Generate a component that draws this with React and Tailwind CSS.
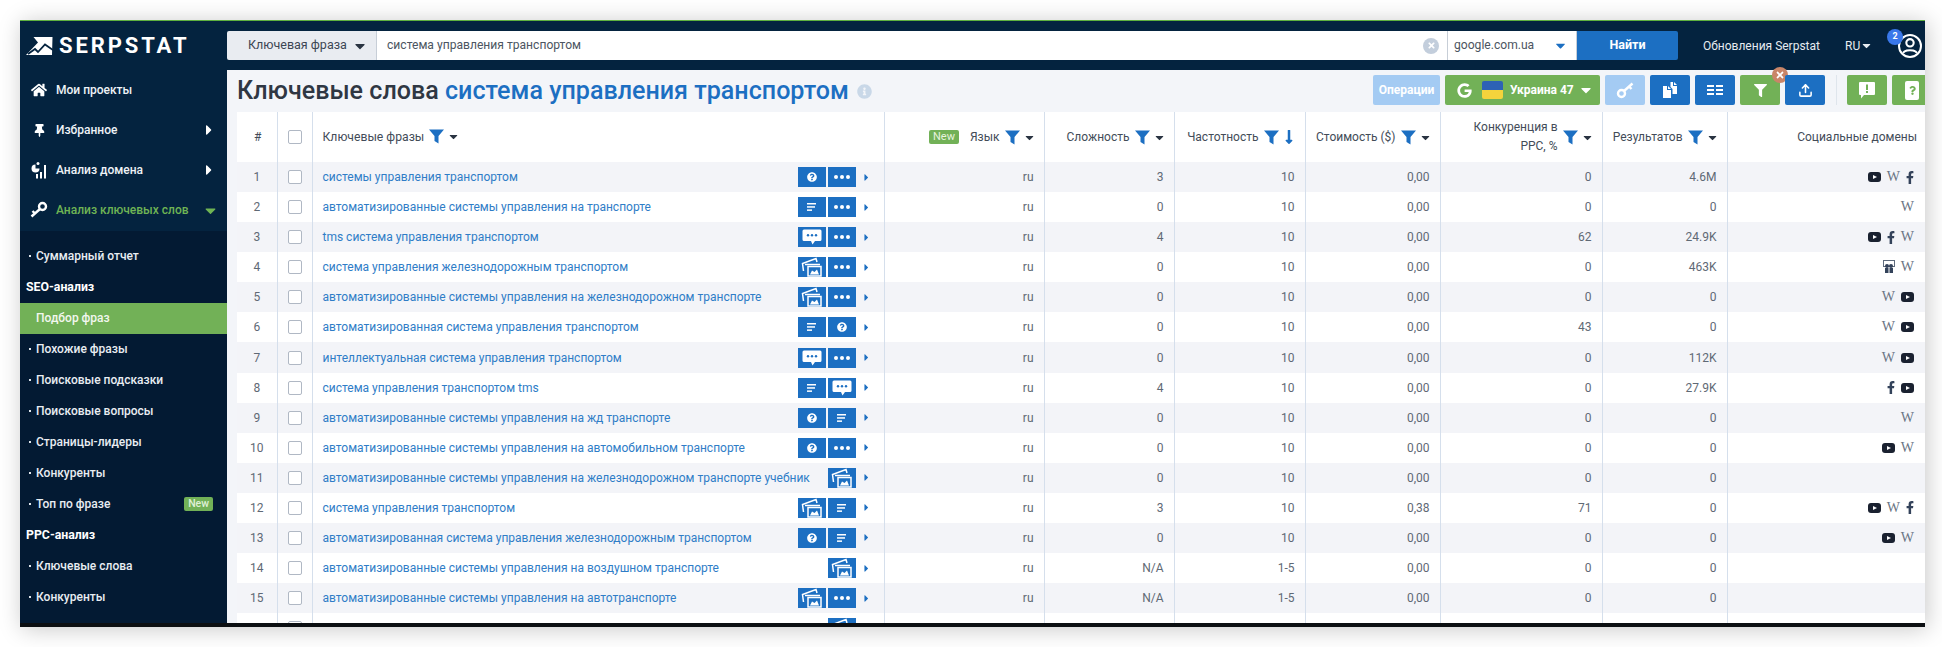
import React from 'react';
import { FaHome, FaThumbtack, FaCaretDown, FaCaretRight, FaTimes, FaFacebookF, FaGoogle, FaInfoCircle, FaQuestionCircle, FaFilter, FaQuestion, FaLongArrowAltDown } from 'react-icons/fa';
import { FiUpload } from 'react-icons/fi';

const rows = [
  ['системы управления транспортом', ['q', 'dots'], '3', '10', '0,00', '0', '4.6M', ['yt', 'w', 'f']],
  ['автоматизированные системы управления на транспорте', ['lines', 'dots'], '0', '10', '0,00', '0', '0', ['w']],
  ['tms система управления транспортом', ['chat', 'dots'], '4', '10', '0,00', '62', '24.9K', ['yt', 'f', 'w']],
  ['система управления железнодорожным транспортом', ['img', 'dots'], '0', '10', '0,00', '0', '463K', ['bag', 'w']],
  ['автоматизированные системы управления на железнодорожном транспорте', ['img', 'dots'], '0', '10', '0,00', '0', '0', ['w', 'yt']],
  ['автоматизированная система управления транспортом', ['lines', 'q'], '0', '10', '0,00', '43', '0', ['w', 'yt']],
  ['интеллектуальная система управления транспортом', ['chat', 'dots'], '0', '10', '0,00', '0', '112K', ['w', 'yt']],
  ['система управления транспортом tms', ['lines', 'chat'], '4', '10', '0,00', '0', '27.9K', ['f', 'yt']],
  ['автоматизированные системы управления на жд транспорте', ['q', 'lines'], '0', '10', '0,00', '0', '0', ['w']],
  ['автоматизированные системы управления на автомобильном транспорте', ['q', 'dots'], '0', '10', '0,00', '0', '0', ['yt', 'w']],
  ['автоматизированные системы управления на железнодорожном транспорте учебник', ['img'], '0', '10', '0,00', '0', '0', []],
  ['система управления транспортом', ['img', 'lines'], '3', '10', '0,38', '71', '0', ['yt', 'w', 'f']],
  ['автоматизированная система управления железнодорожным транспортом', ['q', 'lines'], '0', '10', '0,00', '0', '0', ['yt', 'w']],
  ['автоматизированные системы управления на воздушном транспорте', ['img'], 'N/A', '1-5', '0,00', '0', '0', []],
  ['автоматизированные системы управления на автотранспорте', ['img', 'dots'], 'N/A', '1-5', '0,00', '0', '0', []],
];

const mainNav = [
  { label: 'Мои проекты', icon: <FaHome size={16} /> },
  { label: 'Избранное', icon: <FaThumbtack size={13} />, arrow: true },
  { label: 'Анализ домена', icon: <DomainIcon />, arrow: true },
  { label: 'Анализ ключевых слов', icon: <KeyIcon size={18} className="rotate-180" />, open: true },
];

const subNav = [
  { label: 'Суммарный отчет' },
  { label: 'SEO-анализ', head: true },
  { label: 'Подбор фраз', active: true },
  { label: 'Похожие фразы' },
  { label: 'Поисковые подсказки' },
  { label: 'Поисковые вопросы' },
  { label: 'Страницы-лидеры' },
  { label: 'Конкуренты' },
  { label: 'Топ по фразе', isNew: true },
  { label: 'PPC-анализ', head: true },
  { label: 'Ключевые слова' },
  { label: 'Конкуренты' },
];

function DomainIcon() {
  return (
    <svg width="16" height="17" viewBox="0 0 16 17" fill="white">
      <path d="M4.500 2.500a4 4 0 1 0 4 4h-4z" />
      <rect x="5.500" y="0" width="3" height="3" rx="1.500" />
      <rect x="9" y="10" width="2" height="6.500" />
      <rect x="13" y="3" width="2" height="13.500" />
      <rect x="5" y="12" width="2" height="4.500" />
    </svg>
  );
}

function KeyIcon({ size = 18, className = '' }) {
  return (
    <svg width={size} height={size} viewBox="0 0 18 18" fill="none" stroke="white" strokeWidth="2.400" className={className}>
      <circle cx="5.500" cy="12.500" r="3.500" />
      <path d="M8 10 L16.500 2.500" />
      <path d="M13 5.500 L15.500 8" />
    </svg>
  );
}

function CopyIcon() {
  return (
    <svg width="18" height="18" viewBox="0 0 18 18" fill="white">
      <path d="M9.500 1 H12 V5 H16 V13 H11.500 V8 L9.500 6 Z" />
      <path d="M13 1 L16 4 H13 Z" />
      <path d="M2 5 H6 V9 H10 V17 H2 Z" />
      <path d="M7 5 L10 8 H7 Z" />
    </svg>
  );
}

function Logo() {
  return (
    <svg width="27" height="18" viewBox="0 0 27 18" fill="white">
      <path d="M0 18 L12 5.500 L7.500 0 H26.500 L26 18 Z" />
      <path d="M2 17 L9 12 L12 15 L19 7.500 L27 13" fill="none" stroke="#04233f" strokeWidth="1.800" />
    </svg>
  );
}

function Funnel() {
  return (
    <svg width="15" height="15" viewBox="0 0 15 15" className="inline-block shrink-0" fill="#1c6fc2">
      <path d="M0 0.500 H15 L9.500 7 V14.500 L5.500 12 V7 Z" />
    </svg>
  );
}

function Caret() {
  return <FaCaretDown size={13} className="-ml-[2px] inline-block shrink-0 text-[#2a3442]" />;
}

function LinesIcon() {
  return (
    <svg width="9" height="8" viewBox="0 0 9 8" fill="white">
      <rect x="0" y="0" width="9" height="1.500" />
      <rect x="0" y="3.200" width="8" height="1.500" />
      <rect x="0" y="6.400" width="5" height="1.500" />
    </svg>
  );
}

function ChatIcon() {
  return (
    <svg width="20" height="16" viewBox="0 0 20 16">
      <path d="M2 0.500 H18 A1.500 1.500 0 0 1 19.500 2 V10.500 A1.500 1.500 0 0 1 18 12 H13 L10.500 15.500 L9 12 H2 A1.500 1.500 0 0 1 0.500 10.500 V2 A1.500 1.500 0 0 1 2 0.500 Z" fill="white" />
      <circle cx="6" cy="6.200" r="1.200" fill="#1c6fc2" />
      <circle cx="10" cy="6.200" r="1.200" fill="#1c6fc2" />
      <circle cx="14" cy="6.200" r="1.200" fill="#1c6fc2" />
    </svg>
  );
}

function ImgIcon() {
  return (
    <svg width="22" height="20" viewBox="0 0 22 20" fill="none" stroke="white" strokeWidth="1.500">
      <path d="M2.500 14 L1.500 6.500 L15 1.500 L16 5" />
      <path d="M4 7.500 H19" />
      <rect x="7" y="9.500" width="13" height="9.500" fill="#1c6fc2" />
      <path d="M9 17.500 L11 13.500 L13.500 15 L16 12.500 L18 17.500 Z" fill="white" stroke="none" />
    </svg>
  );
}

function ActionButton({ type }) {
  return (
    <span className="flex h-5 w-7 items-center justify-center overflow-hidden bg-[#1c6fc2] text-white">
      {type === 'q' && <FaQuestionCircle size={10} />}
      {type === 'lines' && <LinesIcon />}
      {type === 'chat' && <ChatIcon />}
      {type === 'img' && <ImgIcon />}
      {type === 'dots' && (
        <span className="flex gap-[2px]">
          <span className="size-[4px] rounded-full bg-white" />
          <span className="size-[4px] rounded-full bg-white" />
          <span className="size-[4px] rounded-full bg-white" />
        </span>
      )}
    </span>
  );
}

function SocialIcon({ type }) {
  if (type === 'w') return <span className="font-['Liberation_Serif',serif] text-[14px] leading-none text-[#6a7585]">W</span>;
  if (type === 'f') return <FaFacebookF size={13} className="w-[8px] text-[#33425a]" />;
  if (type === 'yt')
    return (
      <svg width="13" height="10" viewBox="0 0 13 10">
        <rect width="13" height="10" rx="3" fill="#1a2130" />
        <path d="M5 3 L9 5 L5 7 Z" fill="white" />
      </svg>
    );
  return (
    <svg width="12" height="14" viewBox="0 0 12 14">
      <rect x="0.500" y="0.500" width="11" height="6" fill="none" stroke="#5f6b7d" />
      <circle cx="4" cy="6" r="2" fill="#33425a" />
      <circle cx="8" cy="6" r="2" fill="#33425a" />
      <path d="M2 8 H5.500 V13 H2 Z M6.500 8 H10 V13 H6.500 Z" fill="#33425a" />
    </svg>
  );
}

function ToolButton({ className = '', children }) {
  return <div className={`relative flex h-[30px] shrink-0 items-center justify-center rounded-[2px] text-white ${className}`}>{children}</div>;
}

function HeadCell({ children }) {
  return <span className="flex items-center justify-end gap-[5px] whitespace-nowrap">{children}</span>;
}

const th = 'border-r border-[#d5dfec] pl-[10px] pr-[8px] font-normal';
const td = 'border-r border-[#d5dfec] pr-[10px] text-right';
const box = 'block size-[14px] appearance-none rounded-[2px] border border-[#b0b8c4] bg-white';

export default function App() {
  return (
    <div className="h-[647px] w-[1942px] overflow-hidden bg-white pl-5 pt-5 font-['Roboto',sans-serif]">
      <div className="flex h-[607px] w-[1905px] flex-col overflow-hidden border-t border-b-4 border-t-[#5fb03f] border-b-[#0c0f12] shadow-[2px_2px_22px_rgba(0,0,0,0.22)]">
        <header className="flex h-[49px] shrink-0 items-center bg-[#04233f]">
          <div className="flex w-[207px] shrink-0 items-center gap-[6px] pl-[6px] text-white">
            <Logo />
            <span className="text-[22px] font-bold leading-none tracking-[2.900px]">SERPSTAT</span>
          </div>
          <div className="flex h-[29px] text-[12.5px]">
            <div className="flex w-[149px] items-center justify-between rounded-l-[2px] bg-[#e9ecf1] pl-[21px] pr-[8px] text-[#3c4654]">
              Ключевая фраза <FaCaretDown size={16} className="text-[#2a3442]" />
            </div>
            <div className="flex w-[1071px] items-center justify-between border-l border-[#c7ced7] bg-white pl-[10px] pr-2 text-[12.1px] text-[#4c5561]">
              система управления транспортом
              <span className="flex size-4 items-center justify-center rounded-full bg-[#c3cedc] text-white">
                <FaTimes size={9} />
              </span>
            </div>
            <div className="flex w-[130px] items-center justify-between border-x border-[#c7ced7] bg-white pl-[6px] pr-2 text-[12.1px] text-[#4c5561]">
              google.com.ua <FaCaretDown size={15} className="text-[#1c6fc2]" />
            </div>
            <div className="flex w-[101px] items-center justify-center rounded-r-[2px] bg-[#1c6fc2] font-bold text-white">Найти</div>
          </div>
          <span className="ml-[25px] whitespace-nowrap text-[12px] text-[#e6ebf0]">Обновления Serpstat</span>
          <span className="ml-[25px] flex items-center text-[12px] text-[#e6ebf0]">
            RU
            <FaCaretDown size={13} />
          </span>
          <div className="relative ml-[25px] size-6 shrink-0">
            <div className="flex size-6 items-center justify-center overflow-hidden rounded-full border-2 border-white bg-[#04233f]">
              <svg width="20" height="20" viewBox="0 0 19 19" fill="none" stroke="white" strokeWidth="2">
                <circle cx="9.500" cy="6.500" r="3.500" />
                <path d="M2 18 C3 12 16 12 17 18" />
              </svg>
            </div>
            <span className="absolute -left-[11px] -top-[5px] flex size-4 items-center justify-center rounded-full bg-[#3a78ea] text-[9px] font-bold text-white">2</span>
          </div>
        </header>

        <div className="flex min-h-0 flex-1">
          <aside className="flex w-[207px] shrink-0 flex-col overflow-hidden bg-[#04233f] text-[12px] font-medium">
            <nav className="flex h-[161px] shrink-0 flex-col">
              {mainNav.map((item) => (
                <div key={item.label} className="flex h-10 items-center">
                  <span className="flex w-[36px] shrink-0 justify-center pl-[2px] text-white">{item.icon}</span>
                  <span className={item.open ? 'whitespace-nowrap text-[#6fb454]' : 'text-[#eef2f6]'}>{item.label}</span>
                  {item.arrow && <FaCaretRight size={16} className="ml-auto mr-[10px] text-white" />}
                  {item.open && <FaCaretDown size={17} className="ml-auto mr-[8px] text-[#6fb454]" />}
                </div>
              ))}
            </nav>
            <div className="flex-1 bg-[#031a33] pt-[9.5px]">
              {subNav.map((item) => {
                if (item.head) {
                  return <div key={item.label} className="flex h-[31px] items-center pl-[6px] text-[12.3px] font-bold text-white">{item.label}</div>;
                }
                if (item.active) {
                  return <div key={item.label} className="flex h-[31px] items-center bg-[#72b157] pl-4 text-[#f2f7ee]">{item.label}</div>;
                }
                return (
                  <div key={item.label} className="flex h-[31px] items-center text-[#e9edf2]">
                    <span className="ml-[9px] mr-[5px] size-[2px] bg-[#dfe5eb]" />
                    {item.label}
                    {item.isNew && <span className="ml-auto mr-[14px] rounded-[2px] bg-[#72b157] px-[4px] py-[1px] text-[10.5px] leading-[12px] text-[#dff0d6]">New</span>}
                  </div>
                );
              })}
            </div>
          </aside>

          <main className="flex min-w-0 flex-1 flex-col bg-[#f3f5f9]">
            <div className="flex h-[42px] shrink-0 items-center pl-[10px]">
              <h1 className="whitespace-nowrap text-[25.100px] font-medium leading-none text-[#2f3743]">
                Ключевые слова <span className="text-[#1c6fc2]">система управления транспортом</span>
              </h1>
              <FaInfoCircle size={15} className="ml-2 text-[#c9d8e8]" />
              <div className="ml-auto mt-[5px] flex items-center gap-[5px] self-start">
                <div className="flex h-[30px] w-[67px] shrink-0 items-center justify-center rounded-[2px] bg-[#a4cbf3] text-[12px] font-bold text-white">Операции</div>
                <div className="flex h-[30px] w-[155px] shrink-0 items-center whitespace-nowrap rounded-[2px] bg-[#72b157] pl-[12px] pr-[6px] text-[12px] font-bold text-white">
                  <FaGoogle size={15} />
                  <span className="ml-[10px] mr-[7px] flex h-[18px] w-[21px] shrink-0 flex-col overflow-hidden rounded-[2px]">
                    <span className="flex-1 bg-[#2d62b5]" />
                    <span className="flex-1 bg-[#f4d33c]" />
                  </span>
                  Украина 47
                  <FaCaretDown size={16} className="ml-auto shrink-0" />
                </div>
                <ToolButton className="w-10 bg-[#a4cbf3]"><KeyIcon /></ToolButton>
                <ToolButton className="w-10 bg-[#1c6fc2]"><CopyIcon /></ToolButton>
                <ToolButton className="w-10 bg-[#1c6fc2]">
                  <span className="grid grid-cols-2 gap-x-[2px] gap-y-[2px]">
                    {[0, 1, 2, 3, 4, 5].map((i) => <span key={i} className="h-[2px] w-[7px] bg-white" />)}
                  </span>
                </ToolButton>
                <ToolButton className="w-10 bg-[#72b157]">
                  <FaFilter size={13} />
                  <span className="absolute -right-[8px] -top-[8px] flex size-[16px] items-center justify-center rounded-full bg-[#c98568] text-white">
                    <FaTimes size={10} />
                  </span>
                </ToolButton>
                <ToolButton className="w-10 bg-[#1c6fc2]"><FiUpload size={15} strokeWidth={2.5} /></ToolButton>
                <span className="ml-[6px] mr-[5px] h-[30px] w-px shrink-0 bg-[#dfe5ec]" />
                <ToolButton className="w-10 bg-[#72b157]">
                  <svg width="16" height="17" viewBox="0 0 16 17" fill="white">
                    <path d="M1 0 H15 A1 1 0 0 1 16 1 V12 A1 1 0 0 1 15 13 H5 L2 16.500 V13 H1 A1 1 0 0 1 0 12 V1 A1 1 0 0 1 1 0 Z" />
                    <rect x="7" y="2.500" width="2" height="5.500" fill="#72b157" />
                    <rect x="7" y="9" width="2" height="2" fill="#72b157" />
                  </svg>
                </ToolButton>
                <ToolButton className="w-[33px] justify-start rounded-r-none bg-[#72b157] pl-[13px]">
                  <span className="flex h-[19px] w-[14px] items-center justify-center rounded-[2px] bg-white text-[#72b157]"><FaQuestion size={9} /></span>
                </ToolButton>
              </div>
            </div>

            <div className="min-h-0 flex-1 overflow-hidden pl-[10px]">
              <table className="w-[1688px] table-fixed border-collapse bg-white text-[12px] text-[#5f6975]">
                <colgroup>
                  <col className="w-[40px]" />
                  <col className="w-[35px]" />
                  <col className="w-[572px]" />
                  <col className="w-[160px]" />
                  <col className="w-[130px]" />
                  <col className="w-[131px]" />
                  <col className="w-[135px]" />
                  <col className="w-[162px]" />
                  <col className="w-[125px]" />
                  <col className="w-[198px]" />
                </colgroup>
                <thead>
                  <tr className="h-[50px] text-[#434c58]">
                    <th className={`${th} text-center`}>#</th>
                    <th className={th}><input type="checkbox" className={box} /></th>
                    <th className={`${th} text-left`}>
                      <span className="flex items-center gap-[5px] text-[12.2px]">Ключевые фразы <Funnel /> <Caret /></span>
                    </th>
                    <th className={th}>
                      <HeadCell>
                        <span className="mr-[6px] rounded-[2px] bg-[#72b157] px-[4px] text-[11px] leading-[14px] text-[#e7f3df]">New</span>
                        Язык <Funnel /> <Caret />
                      </HeadCell>
                    </th>
                    <th className={th}><HeadCell>Сложность <Funnel /> <Caret /></HeadCell></th>
                    <th className={th}>
                      <HeadCell>
                        Частотность <Funnel /> <FaLongArrowAltDown size={16} className="-ml-[3px] text-[#1c6fc2]" />
                      </HeadCell>
                    </th>
                    <th className={th}><HeadCell>Стоимость ($) <Funnel /> <Caret /></HeadCell></th>
                    <th className={th}>
                      <HeadCell>
                        <span className="text-right leading-[19px]">Конкуренция в<br />PPC, %</span> <Funnel /> <Caret />
                      </HeadCell>
                    </th>
                    <th className={th}><HeadCell>Результатов <Funnel /> <Caret /></HeadCell></th>
                    <th className="px-[8px] text-right font-normal">Социальные домены</th>
                  </tr>
                </thead>
                <tbody>
                  {rows.map((row, i) => (
                    <tr key={i} className={i % 2 === 0 ? 'h-[30.08px] bg-[#f3f4f8]' : 'h-[30.08px] bg-white'}>
                      <td className="border-r border-[#d5dfec] text-center">{i + 1}</td>
                      <td className="border-r border-[#d5dfec] px-[10px]">
                        <input type="checkbox" className={box} />
                      </td>
                      <td className="border-r border-[#d5dfec] pl-[10px]">
                        <div className="flex items-center">
                          <a className="whitespace-nowrap text-[#2f7dc7]">{row[0]}</a>
                          <span className="ml-auto flex shrink-0 items-center gap-[2px]">
                            {row[1].map((b, k) => <ActionButton key={k} type={b} />)}
                          </span>
                          <FaCaretRight size={11} className="ml-[5px] mr-[12px] shrink-0 text-[#1c6fc2]" />
                        </div>
                      </td>
                      <td className={td}>ru</td>
                      <td className={td}>{row[2]}</td>
                      <td className={td}>{row[3]}</td>
                      <td className={td}>{row[4]}</td>
                      <td className={td}>{row[5]}</td>
                      <td className={td}>{row[6]}</td>
                      <td className="pr-[11px]">
                        <span className="flex items-center justify-end gap-[6px]">
                          {row[7].map((s, k) => <SocialIcon key={k} type={s} />)}
                        </span>
                      </td>
                    </tr>
                  ))}
                  <tr className="h-[30.08px] bg-white">
                    <td className="border-r border-[#d5dfec]" />
                    <td className="border-r border-[#d5dfec] px-[10px]"><input type="checkbox" className={box} /></td>
                    <td className="border-r border-[#d5dfec]">
                      <div className="flex items-center justify-end">
                        <ActionButton type="img" />
                        <FaCaretRight size={11} className="ml-[5px] mr-[12px] shrink-0 text-[#1c6fc2]" />
                      </div>
                    </td>
                    <td className="border-r border-[#d5dfec]" />
                    <td className="border-r border-[#d5dfec]" />
                    <td className="border-r border-[#d5dfec]" />
                    <td className="border-r border-[#d5dfec]" />
                    <td className="border-r border-[#d5dfec]" />
                    <td className="border-r border-[#d5dfec]" />
                    <td />
                  </tr>
                </tbody>
              </table>
            </div>
          </main>
        </div>
      </div>
    </div>
  );
}
